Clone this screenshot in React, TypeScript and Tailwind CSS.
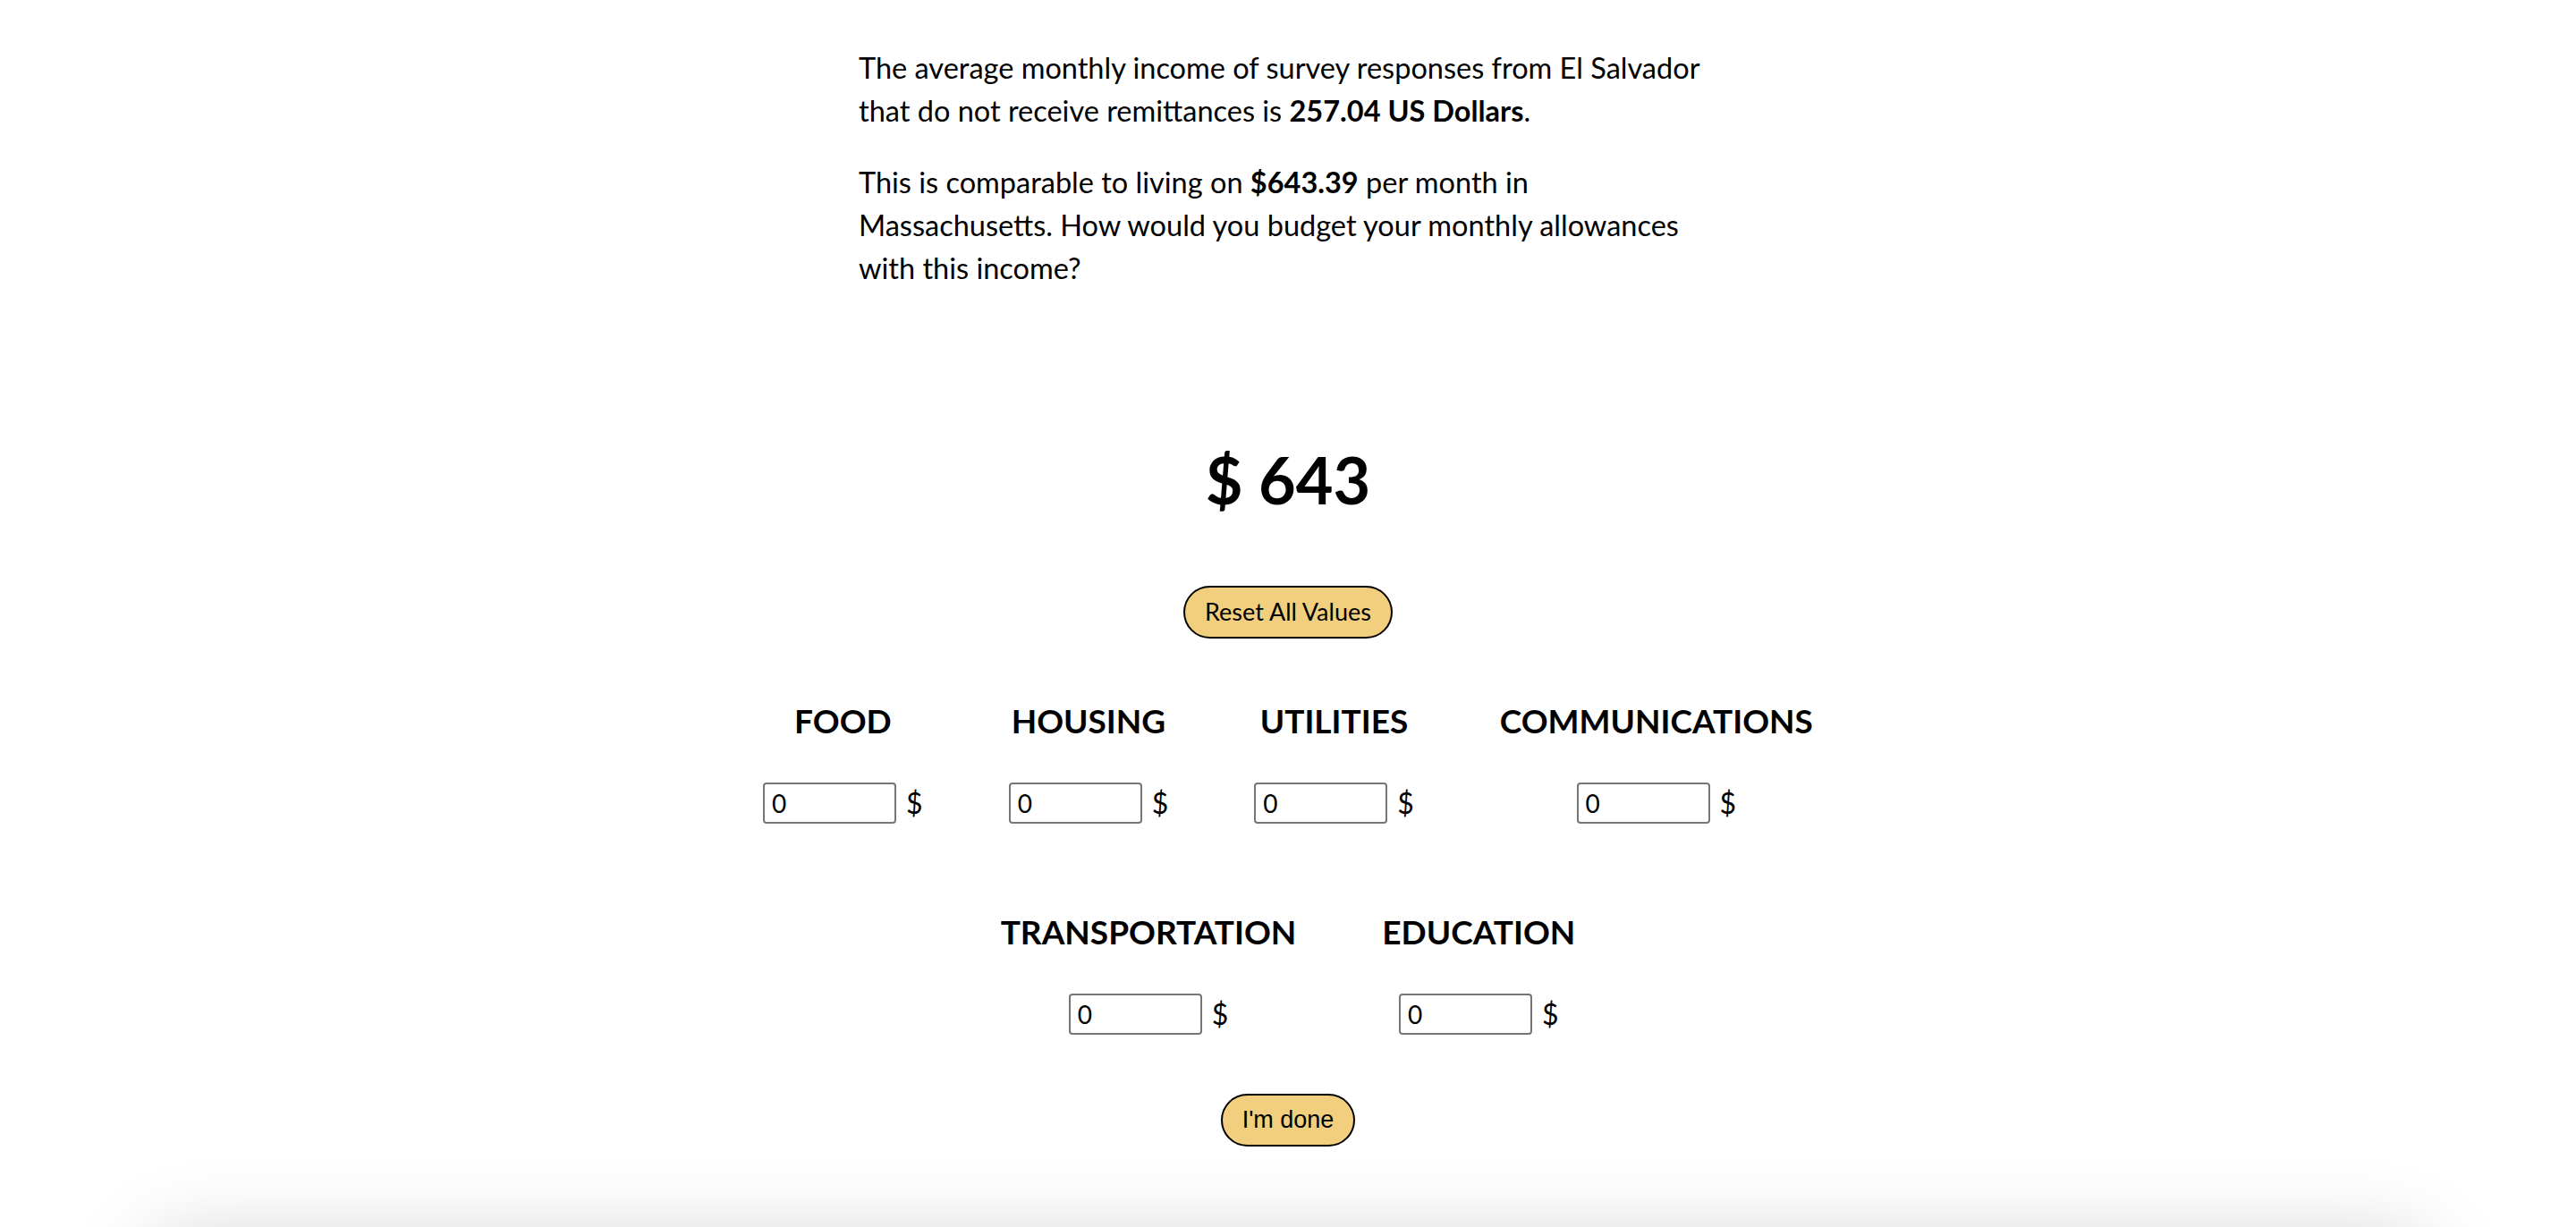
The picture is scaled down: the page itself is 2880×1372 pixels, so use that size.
import { useState } from 'react';

const categories = [
  ['FOOD', 'HOUSING', 'UTILITIES', 'COMMUNICATIONS'],
  ['TRANSPORTATION', 'EDUCATION'],
];

function Category({ name }: { name: string }) {
  const [value, setValue] = useState('0');
  return (
    <div className="flex flex-col items-center">
      <h3 className="text-[37px] leading-[51px] font-bold text-black">{name}</h3>
      <div className="mt-[43px] flex items-center">
        <input
          value={value}
          onChange={(e) => setValue(e.target.value)}
          className="w-[149px] h-[46px] border-2 border-[#767676] rounded-[4px] pl-[8px] text-[28px] text-black bg-white outline-none"
        />
        <span className="ml-[11px] text-[32px] leading-[48px] text-black">$</span>
      </div>
    </div>
  );
}

export default function App() {
  return (
    <div className="min-h-screen bg-white text-black font-['Lato',sans-serif] overflow-hidden">
      <div className="w-[960px] mx-auto pt-[52px] text-[32.5px] leading-[48px] whitespace-nowrap">
        <p>
          The average monthly income of survey responses from El Salvador
          <br />
          that do not receive remittances is <b>257.04 US Dollars</b>.
        </p>
        <p className="mt-[32px]">
          This is comparable to living on <b>$643.39</b> per month in
          <br />
          Massachusetts. How would you budget your monthly allowances
          <br />
          with this income?
        </p>
      </div>

      <div className="mt-[163px] flex flex-col items-center">
        <h1 className="text-[72px] leading-[98px] font-bold">$ 643</h1>
        <button className="mt-[70px] h-[59px] px-[22px] rounded-full border-2 border-black bg-[#f2cf7e] text-[27px]">
          Reset All Values
        </button>
      </div>

      <div className="mt-[66px] flex flex-col items-center gap-y-[94px]">
        {categories.map((row, i) => (
          <div key={i} className="flex justify-center gap-x-[96px]">
            {row.map((c) => (
              <Category key={c} name={c} />
            ))}
          </div>
        ))}
      </div>

      <div className="mt-[65px] flex justify-center">
        <button className="h-[59px] px-[22px] rounded-full border-2 border-black bg-[#f2cf7e] text-[27px] font-['Liberation_Sans',sans-serif]">
          I'm done
        </button>
      </div>

      <div className="mx-[170px] mt-[112px] h-[400px] bg-white rounded-[40px] shadow-[0_0_90px_10px_rgba(0,0,0,0.18)]" />
    </div>
  );
}
